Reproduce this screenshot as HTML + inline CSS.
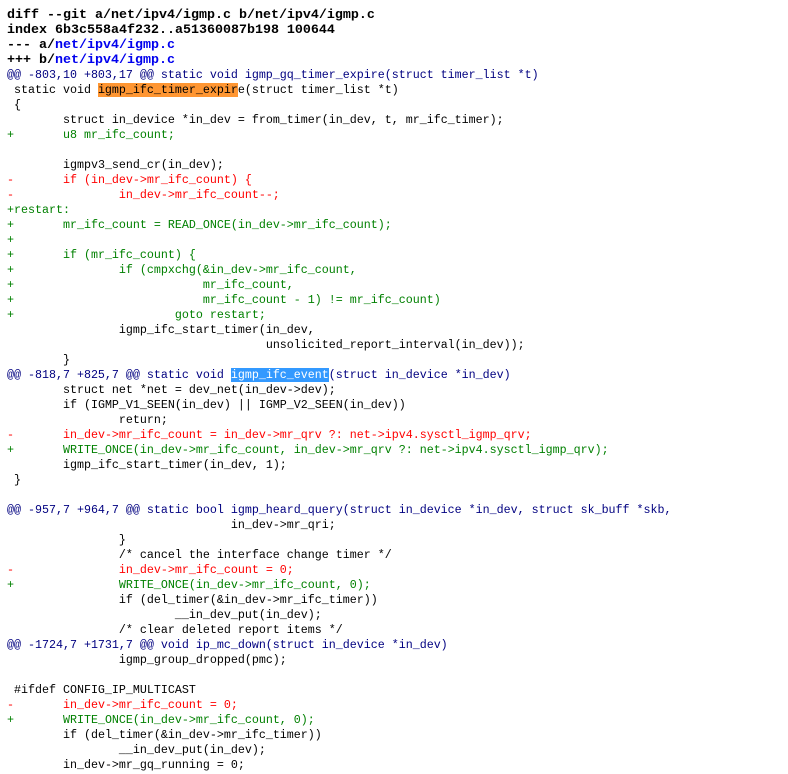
<!DOCTYPE html>
<html><head><meta charset="utf-8"><style>
html,body{margin:0;padding:0;background:#fff;width:788px;height:774px;overflow:hidden}
pre{margin:0;padding:8px 0 0 7px;font-family:"Liberation Mono",monospace;font-size:11.67px;line-height:15px;tab-size:8;-moz-tab-size:8;color:#000;white-space:pre}
.h{font-weight:bold;font-size:13.33px;color:#000}
.l{color:#0000ee}
.at{color:#000080}
.d{color:#ff0000}
.a{color:#008000}
.o{background:#ff9632}
.s{background:#3399ff;color:#fff}
</style></head><body><pre><span class="h">diff --git a/net/ipv4/igmp.c b/net/ipv4/igmp.c</span>
<span class="h">index 6b3c558a4f232..a51360087b198 100644</span>
<span class="h">--- a/<span class="l">net/ipv4/igmp.c</span></span>
<span class="h">+++ b/<span class="l">net/ipv4/igmp.c</span></span>
<span class="at">@@ -803,10 +803,17 @@ static void igmp_gq_timer_expire(struct timer_list *t)</span>
 static void <span class="o">igmp_ifc_timer_expir</span>e(struct timer_list *t)
 {
 	struct in_device *in_dev = from_timer(in_dev, t, mr_ifc_timer);
<span class="a">+	u8 mr_ifc_count;</span>
 
 	igmpv3_send_cr(in_dev);
<span class="d">-	if (in_dev-&gt;mr_ifc_count) {</span>
<span class="d">-		in_dev-&gt;mr_ifc_count--;</span>
<span class="a">+restart:</span>
<span class="a">+	mr_ifc_count = READ_ONCE(in_dev-&gt;mr_ifc_count);</span>
<span class="a">+</span>
<span class="a">+	if (mr_ifc_count) {</span>
<span class="a">+		if (cmpxchg(&amp;in_dev-&gt;mr_ifc_count,</span>
<span class="a">+			    mr_ifc_count,</span>
<span class="a">+			    mr_ifc_count - 1) != mr_ifc_count)</span>
<span class="a">+			goto restart;</span>
 		igmp_ifc_start_timer(in_dev,
 				     unsolicited_report_interval(in_dev));
 	}
<span class="at">@@ -818,7 +825,7 @@ static void <span class="s">igmp_ifc_event</span>(struct in_device *in_dev)</span>
 	struct net *net = dev_net(in_dev-&gt;dev);
 	if (IGMP_V1_SEEN(in_dev) || IGMP_V2_SEEN(in_dev))
 		return;
<span class="d">-	in_dev-&gt;mr_ifc_count = in_dev-&gt;mr_qrv ?: net-&gt;ipv4.sysctl_igmp_qrv;</span>
<span class="a">+	WRITE_ONCE(in_dev-&gt;mr_ifc_count, in_dev-&gt;mr_qrv ?: net-&gt;ipv4.sysctl_igmp_qrv);</span>
 	igmp_ifc_start_timer(in_dev, 1);
 }
 
<span class="at">@@ -957,7 +964,7 @@ static bool igmp_heard_query(struct in_device *in_dev, struct sk_buff *skb,</span>
 				in_dev-&gt;mr_qri;
 		}
 		/* cancel the interface change timer */
<span class="d">-		in_dev-&gt;mr_ifc_count = 0;</span>
<span class="a">+		WRITE_ONCE(in_dev-&gt;mr_ifc_count, 0);</span>
 		if (del_timer(&amp;in_dev-&gt;mr_ifc_timer))
 			__in_dev_put(in_dev);
 		/* clear deleted report items */
<span class="at">@@ -1724,7 +1731,7 @@ void ip_mc_down(struct in_device *in_dev)</span>
 		igmp_group_dropped(pmc);
 
 #ifdef CONFIG_IP_MULTICAST
<span class="d">-	in_dev-&gt;mr_ifc_count = 0;</span>
<span class="a">+	WRITE_ONCE(in_dev-&gt;mr_ifc_count, 0);</span>
 	if (del_timer(&amp;in_dev-&gt;mr_ifc_timer))
 		__in_dev_put(in_dev);
 	in_dev-&gt;mr_gq_running = 0;
</pre></body></html>
